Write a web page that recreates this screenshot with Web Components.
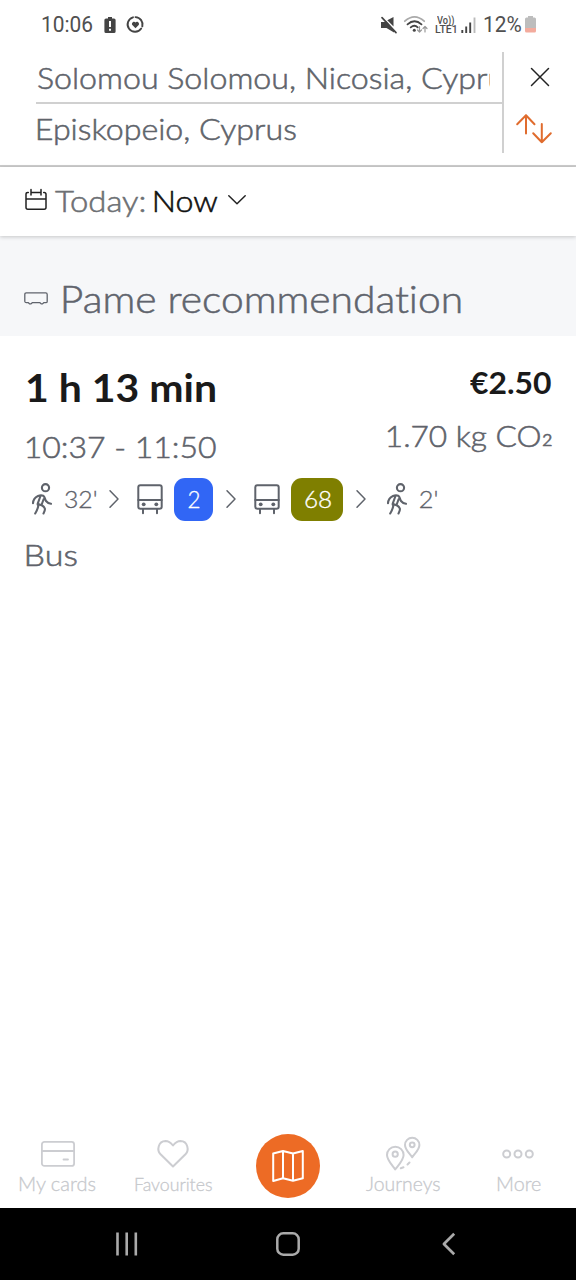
<!DOCTYPE html>
<html lang="en">
<head>
<meta charset="utf-8">
<title>Pame journey planner</title>
<style>
html,body{margin:0;padding:0;background:#fff}
body{width:576px;height:1280px;overflow:hidden;font-family:Lato,"Noto Sans",sans-serif}
</style>
</head>
<body>
<journey-app></journey-app>
<script>
const define=(name,html,setup)=>customElements.define(name,class extends HTMLElement{
  connectedCallback(){
    if(this.shadowRoot)return;
    const t=document.createElement('template');
    t.innerHTML='<style>:host{display:block;box-sizing:border-box}*{box-sizing:border-box}svg{display:block;flex:none;overflow:visible}</style>'+html;
    this.attachShadow({mode:'open'}).append(t.content.cloneNode(true));
    if(setup)setup.call(this,this.shadowRoot);
  }
});

/* A single line of text whose glyphs span exactly the given width. */
const ctx=document.createElement('canvas').getContext('2d');
define('fit-text',`<style>
:host{flex:none;white-space:pre;line-height:1.2;font-variant-ligatures:none}
span{display:inline-block;transform-origin:0 0;vertical-align:top;-webkit-text-stroke:var(--thicken,0)}
</style><span><slot></slot></span>`,function(root){
  const size=this.getAttribute('size'),w=+this.getAttribute('w'),weight=this.getAttribute('weight')||300;
  const face=this.getAttribute('face')||'Lato, "Noto Sans", sans-serif';
  this.style.cssText+=`;width:${w}px;height:${size*1.2}px;font:${weight} ${size}px/1.2 ${face};font-variant-ligatures:none`;
  const light=weight==300;
  if(light&&size>=22)this.style.setProperty('--thicken',size>=30?'.55px':'.3px');
  ctx.font=`${weight} ${size}px ${face}`;
  /* a zero-width non-joiner keeps "ti" as two glyphs while measuring */
  const m=ctx.measureText(this.textContent.replace('ti','t\u200ci'));
  /* the outline added to light text widens it by a pixel */
  const pad=light?1:0;
  const k=(w-pad)/(m.actualBoundingBoxLeft+m.actualBoundingBoxRight);
  root.querySelector('span').style.transform=`translateX(${m.actualBoundingBoxLeft*k+pad}px) scaleX(${k})`;
});

const icons={
walk:['0 0 20 32',20,32,`<g stroke-width="2.100"><circle cx="13.500" cy="4.700" r="3.600"/><path d="M1 20.300c.2-3.500 1.700-5.800 5-7.300 1.800-.8 4-.8 5.200-.3 1.800.9 1.600 3.800 2.800 5.300 1.200 1.500 2.800 2.600 5 2.800M8.300 13.500L5.800 20.300q-.5 1.500.6 2.200-.9 4.300-3.200 8M11.700 16l-2.200 6c3.700 2.400 4.500 4 2 8.500M6.200 21l3.300 1.300"/></g>`],
bus:['0 0 26 30',26,30,`<g stroke-width="2"><rect x="1.300" y="1.300" width="23.400" height="23.400" rx="2"/><path d="M1.300 16h23.400M6 25v4.300M20 25v4.300"/></g><g fill="currentColor" stroke="none"><circle cx="6.700" cy="20.300" r="1.900"/><circle cx="19.300" cy="20.300" r="1.900"/></g>`],
next:['0 0 10 18',10,18,`<path stroke-width="1.500" d="M1 .7L9 9 1 17.300"/>`],
calendar:['0 0 22 21',22,21,`<path stroke-width="1.500" d="M3.300 3.500H2.800Q1 3.500 1 5.200v13.300q0 1.700 1.800 1.700h16.400q1.800 0 1.800-1.700V5.200q0-1.700-1.800-1.700h-.5M1 10h20M6 .5v5.500M16 .5v5.500M6 3.500h10"/>`],
down:['0 0 18 10',18,10,`<path stroke-width="1.500" d="M.8.8L9 8.700 17.200.8"/>`],
shuttle:['0 0 24 13',24,13,`<path stroke-width="1.300" d="M2.300.8h19.400q1.500 0 1.500 1.700v7q0 1.200-1.400 1.200h-2.100l-1.200 1.200h-1.300l-1.200-1.200H8.200L7 11.900H5.700l-1.300-1.200H2.300q-1.300 0-1.500-1.200v-7Q.8.8 2.300.8z"/>`],
close:['0 0 20 20',20,20,`<path stroke-width="1.500" d="M1.500 1.500l17 17M18.500 1.500L1.500 18.500"/>`],
swap:['0 0 36 30',36,30,`<path stroke-width="2" d="M10 19.500V1.200M1.200 10.200L10 1.200l8.500 9M25.800 10v18.300M17.200 19.200l8.600 9.100 9-9.100"/>`],
card:['0 0 34 26',34,26,`<g stroke-width="1.800"><rect x=".9" y=".9" width="32.200" height="24" rx="2.500"/><path d="M1 10h32M22.500 18.500h4.500"/></g>`],
heart:['0 0 32 28',32,28,`<path stroke-width="2" d="M16 26.500L3.300 14C-.2 10.200 1 1.300 8.500 1c3.500 0 5.500 2 7.500 4.500C18 3 20 1 23.500 1 31 1.300 32.200 10.200 28.700 14z"/>`],
map:['0 0 32 32',32,32,`<path stroke-width="2" d="M1.200 3.500L11 1v27.200L1.200 31zM11 1l10 2.500v27.200L11 28.200M21 3.500L30.800 1v27.200L21 30.700"/>`],
pins:['0 0 34 34',34,34,`<g stroke-width="2"><path d="M9.200 32.500C6 28 1 23 1 18a8.300 8.300 0 0 1 16.600 0c0 5-5 10-8.400 14.500zM26.200 20.300C24 16.500 19 13 19 8a7.200 7.200 0 0 1 14.400 0c0 5-5 8.500-7.200 12.300z"/><circle cx="9.200" cy="17.200" r="2.600"/><circle cx="26.200" cy="7.800" r="2.400"/><path d="M14.800 31.300l2.700-1M21.500 27.500l2-2"/></g>`],
dots:['0 0 32 10',32,10,`<g stroke-width="2"><circle cx="4.700" cy="5" r="3.500"/><circle cx="16" cy="5" r="3.500"/><circle cx="27.300" cy="5" r="3.500"/></g>`],
alert:['0 0 12 17',12,17,`<path fill="currentColor" stroke="none" fill-rule="evenodd" d="M4 0h4v1.500h2q1.600 0 1.600 1.600v11.400q0 1.600-1.600 1.600H2Q.4 16.100.4 14.500V3.100Q.4 1.500 2 1.500h2zM5 4v6h2V4zM5 11.800v2h2v-2z"/>`],
care:['0 0 17 17',17,17,`<g stroke-width="1.900"><path d="M6 1.300a7.400 7.400 0 1 0 8.200 11.200M8.500 1.100a7.400 7.400 0 0 1 6.800 9.300"/></g><path fill="currentColor" stroke="none" d="M8.500 12.300L5.300 9C4 7.200 6.800 4.500 8.500 6.500c1.700-2 4.500.7 3.200 2.500z"/>`],
mute:['0 0 16 16',16,16,`<path fill="currentColor" stroke="none" d="M0 5h4l1-1 8 9v2.500L5.500 11H0zM6.300 3.200L12.500 0v9.500z"/><path stroke-width="1.700" d="M1 .6l14 15"/>`],
wifi:['0 0 24 17',24,17,`<g stroke-width="1.800"><path stroke="#aaa" d="M.8 5.200Q10.500-3.500 20.200 5.200"/><path d="M3.500 8.400q7-6.200 14 0M6.700 11.400q3.800-3.200 7 0"/></g><circle cx="10.300" cy="14.300" r="1.500" fill="currentColor" stroke="none"/><path stroke="#999" stroke-width="1.200" d="M15.500 10.500v5.500m-2-2l2 2 2-2M21 16v-5.500m-2 2l2-2 2 2"/>`],
signal:['0 0 15 16',15,16,`<g stroke-width="1.900" stroke-linecap="butt"><path d="M1.300 16v-3M5.200 16V9.500M9.200 16V5.500"/><path stroke="#bbb" d="M13.500 16V.5"/></g>`],
battery:['0 0 11 17',11,17,`<path fill="#bdbdbd" stroke="none" d="M3 0h5v1.500h1.500Q11 1.500 11 3v10H0V3q0-1.500 1.500-1.500H3z"/><path fill="#f3ab9d" stroke="none" d="M0 12h11v3q0 1.500-1.500 1.500h-8Q0 16.500 0 15z"/>`],
recents:['0 0 22 24',22,24,`<path stroke-width="2.600" stroke-linecap="butt" d="M1.500 .5v23M10.700 .5v23M19.800 .5v23"/>`],
home:['0 0 24 24',24,24,`<rect x="1.300" y="1.300" width="21.400" height="21.400" rx="6" stroke-width="2.500"/>`],
back:['0 0 13 22',13,22,`<path stroke-width="2.700" stroke-linecap="butt" d="M12.200.8L1.900 11l10.300 10.200"/>`]
};
define('ui-icon',`<style>:host{flex:none}</style>`,function(root){
  const [vb,w,h,body]=icons[this.getAttribute('name')];
  const t=document.createElement('template');
  t.innerHTML=`<svg viewBox="${vb}" width="${w}" height="${h}" fill="none" stroke="currentColor" stroke-linecap="round" stroke-linejoin="round">${body}</svg>`;
  root.append(t.content);
});

define('status-bar',`<style>
:host{height:51px;color:#505050;display:flex;align-items:flex-start;padding:12px 40px 0 42px}
ui-icon{margin-top:5px;color:#444}
.sp{flex:1}
.volte{margin:3px 0 0 7px;width:22px;height:20px}
</style>
<fit-text size="21.500" w="51" weight="400" face="Roboto, sans-serif">10:06</fit-text>
<ui-icon name="alert" style="margin-left:11px"></ui-icon><ui-icon name="care" style="margin-left:11px;margin-top:4px"></ui-icon>
<div class="sp"></div>
<ui-icon name="mute"></ui-icon><ui-icon name="wifi" style="margin-left:7px;margin-top:4px"></ui-icon>
<div class="volte"><fit-text size="10" w="17" weight="500" face="Roboto, sans-serif" style="margin-left:2px">Vo))</fit-text><fit-text size="10" w="21" weight="500" face="Roboto, sans-serif" style="margin-top:-3px">LTE1</fit-text></div>
<ui-icon name="signal" style="margin-left:4px"></ui-icon>
<fit-text size="21.500" w="37" weight="400" face="Roboto, sans-serif" style="margin-left:8px">12%</fit-text>
<ui-icon name="battery" style="margin-left:4px;margin-top:4px"></ui-icon>`);

define('search-panel',`<style>
:host{height:116px;display:grid;grid-template-columns:468px 1fr;padding:1px 0 0 36px;border-bottom:2px solid #ccc;color:#5f646b}
.fields{height:101px;border-right:2px solid #d0d0d0}
.f{height:52px;padding:7px 12px 0 1px;border-bottom:2px solid #d0d0d0}
.clip{overflow:hidden;height:40px}
.f+.f{border:0;height:49px;padding:6px 0 0 1px}
.act{display:flex;flex-direction:column;align-items:center;color:#222}
</style>
<div class="fields"><div class="f"><div class="clip"><fit-text size="30" w="481">Solomou Solomou, Nicosia, Cyprus</fit-text></div></div>
<div class="f"><fit-text size="30" w="259">Episkopeio, Cyprus</fit-text></div></div>
<div class="act"><ui-icon name="close" style="margin-top:15px"></ui-icon><ui-icon name="swap" style="color:#e06c2e;margin:27px 12px 0 0"></ui-icon></div>`);

define('date-bar',`<style>
:host{height:69px;display:flex;padding:15px 0 0 25px;color:#6d7074;background:#fff;position:relative;box-shadow:0 1px 4px rgba(0,0,0,.2)}
</style>
<ui-icon name="calendar" style="color:#222;margin-top:7px"></ui-icon>
<fit-text size="30" w="90" style="margin-left:7px">Today:</fit-text>
<fit-text size="30" w="64" style="margin-left:10px;color:#111">Now</fit-text>
<ui-icon name="down" style="color:#222;margin:13px 0 0 10px"></ui-icon>`);

define('section-title',`<style>
:host{height:100px;background:#f6f7f9;display:flex;padding:40px 0 0 24px;color:#60646d}
</style><ui-icon name="shuttle" style="margin-top:16px"></ui-icon>
<fit-text size="38" w="398" style="margin-left:14px">Pame recommendation</fit-text>`);

define('route-badge',`<style>
:host{flex:none;height:43px;border-radius:11px;background:var(--line);color:#fff;display:flex;justify-content:center;align-items:center}
</style><slot></slot>`);

define('route-card',`<style>
:host{flex:1;padding:28px 25px 0 26px;color:#5f636b}
.top{display:flex;justify-content:space-between}
.r{display:flex;flex-direction:column;align-items:flex-end}
.b{color:#1a1a1a}
.sub{font-size:33px;line-height:0;position:relative;top:-5px}
.legs{display:flex;align-items:center;height:43px;margin:14px 0 0 6px}
</style>
<div class="top"><div><fit-text class="b" size="39" weight="700" w="188" style="margin-left:1px">1 h 13 min</fit-text>
<fit-text size="30" w="190" style="margin-top:17px">10:37 - 11:50</fit-text></div>
<div class="r"><fit-text class="b" size="30" weight="700" w="81">€2.50</fit-text>
<fit-text size="30" w="164" style="margin-top:17px">1.70 kg CO<span class="sub">₂</span></fit-text></div></div>
<div class="legs"><ui-icon name="walk"></ui-icon><fit-text size="22.500" w="32" style="margin-left:12px">32'</fit-text>
<ui-icon name="next" style="margin-left:13px"></ui-icon><ui-icon name="bus" style="margin-left:18px"></ui-icon>
<route-badge style="--line:#3166f5;width:39px;margin-left:11px"><fit-text size="22.500" w="12">2</fit-text></route-badge>
<ui-icon name="next" style="margin-left:13px"></ui-icon><ui-icon name="bus" style="margin-left:18px"></ui-icon>
<route-badge style="--line:#7f7f00;width:52px;margin-left:11px"><fit-text size="22.500" w="27">68</fit-text></route-badge>
<ui-icon name="next" style="margin-left:13px"></ui-icon><ui-icon name="walk" style="margin-left:21px"></ui-icon>
<fit-text size="22.500" w="18" style="margin-left:12px">2'</fit-text></div>
<fit-text size="30" w="51" style="margin-top:15px">Bus</fit-text>`);

define('nav-tab',`<style>
:host{width:115.200px;height:78px;display:flex;flex-direction:column;align-items:center;color:#cccdd1}
.i{height:40px;display:flex;align-items:center}
</style><div class="i"><slot name="icon"></slot></div><slot></slot>`);

define('tab-bar',`<style>
:host{height:78px;display:flex}
fit-text{--thicken:.3px;color:#c6c8cc}
.map{width:64px;height:64px;border-radius:50%;background:#ed6b25;color:#fff;display:flex;align-items:center;justify-content:center;margin-top:4px}
.mid{width:115.200px;display:flex;justify-content:center}
</style>
<nav-tab><ui-icon slot="icon" name="card" style="margin-top:8px"></ui-icon><fit-text size="20" w="77" style="margin-top:1px">My cards</fit-text></nav-tab>
<nav-tab><ui-icon slot="icon" name="heart" style="margin-top:7px"></ui-icon><fit-text size="17.500" w="78" style="margin-top:4px">Favourites</fit-text></nav-tab>
<div class="mid"><div class="map"><ui-icon name="map"></ui-icon></div></div>
<nav-tab><ui-icon slot="icon" name="pins" style="margin-top:8px"></ui-icon><fit-text size="20" w="75" style="margin:1px 1px 0 0">Journeys</fit-text></nav-tab>
<nav-tab><ui-icon slot="icon" name="dots" style="margin-top:7px"></ui-icon><fit-text size="20" w="44" style="margin:1px 0 0 1px">More</fit-text></nav-tab>`);

define('system-nav',`<style>
:host{height:72px;background:#000;color:#aaa;display:flex;align-items:center;padding-left:116px}
</style><ui-icon name="recents"></ui-icon><ui-icon name="home" style="margin-left:138px"></ui-icon><ui-icon name="back" style="margin-left:142px"></ui-icon>`);

define('journey-app',`<style>
:host{width:576px;height:1280px;display:flex;flex-direction:column;background:#fff}
</style><status-bar></status-bar><search-panel></search-panel><date-bar></date-bar>
<section-title></section-title><route-card></route-card><tab-bar></tab-bar><system-nav></system-nav>`);
</script>
</body>
</html>
